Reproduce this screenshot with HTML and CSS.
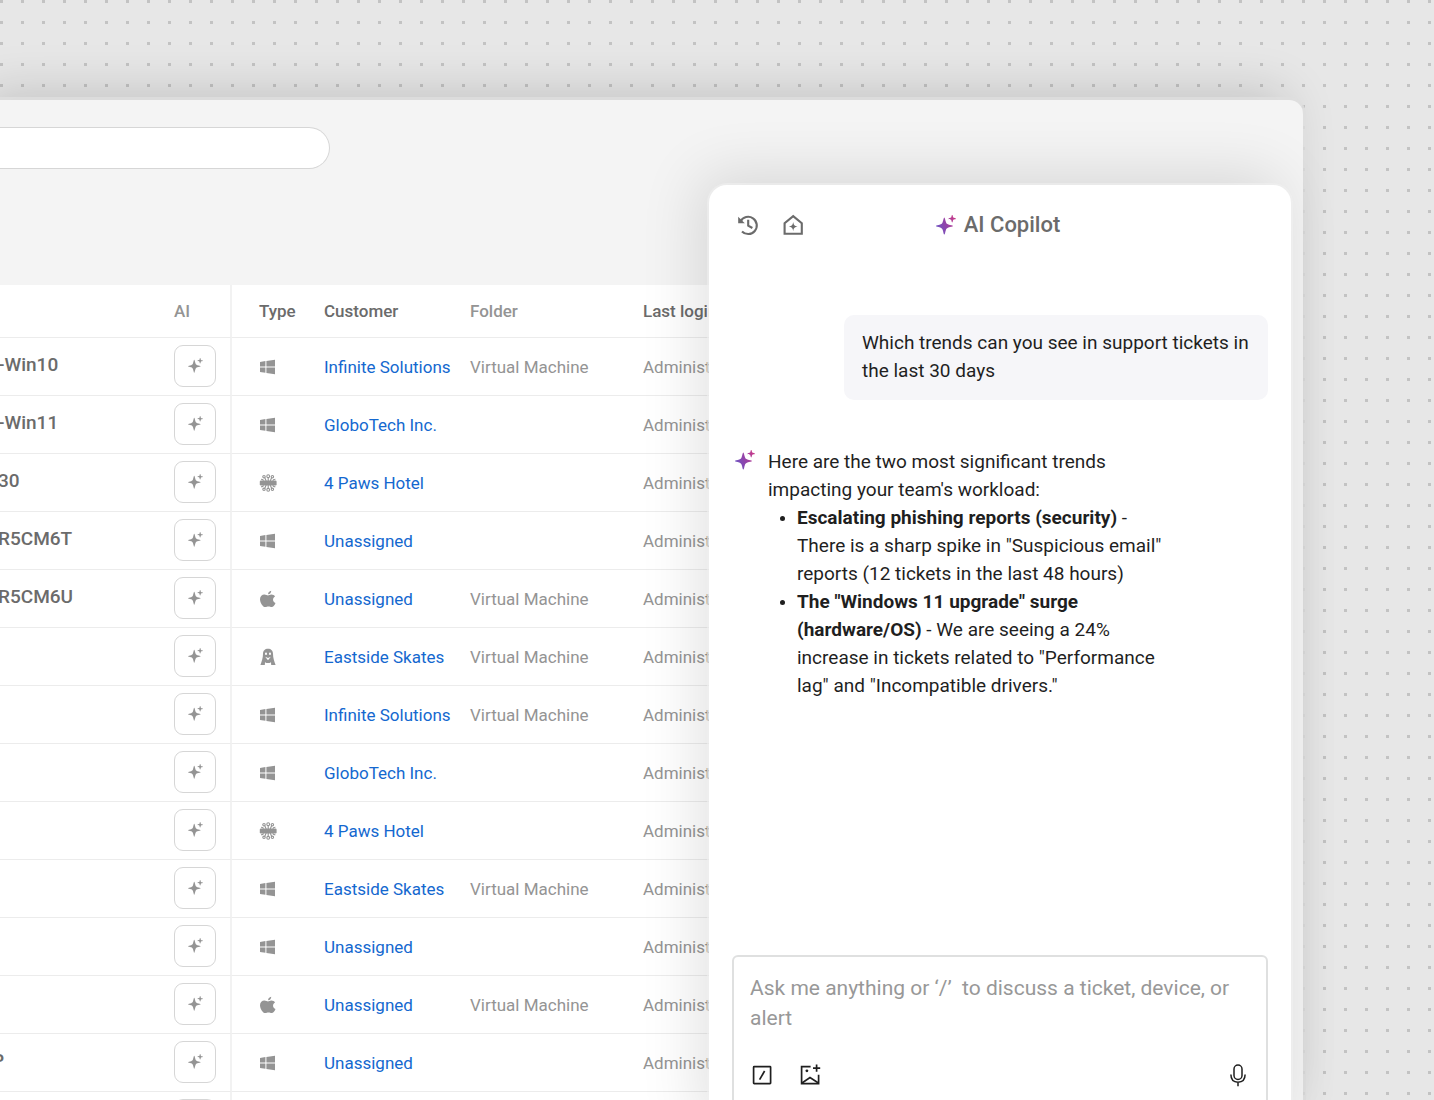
FILE: index.html
```html
<!DOCTYPE html>
<html lang="en">
<head>
  <meta charset="UTF-8" />
  <meta name="viewport" content="width=device-width, initial-scale=1.0" />
  <title>AI Copilot</title>
  <link rel="stylesheet" href="styles.css">
</head>
<body>
  <svg class="sprite" aria-hidden="true">
    <defs>
      <linearGradient id="spark-gradient" gradientUnits="userSpaceOnUse" x1="0" y1="14" x2="20" y2="4">
        <stop offset="0" stop-color="#6b55c4" />
        <stop offset="0.5" stop-color="#9443a8" />
        <stop offset="1" stop-color="#c93a88" />
      </linearGradient>
    </defs>
    <symbol id="spark" viewBox="0 0 20 20">
      <path d="M8.3 2.4C8.9 2.4 9.2 5 9.9 7.1C10.4 8.6 11 9.1 12.4 9.6C14.4 10.2 16.9 10.4 16.9 11C16.9 11.6 14.4 11.8 12.4 12.4C11 12.9 10.4 13.4 9.9 14.9C9.2 17 8.9 19.6 8.3 19.6C7.7 19.6 7.4 17 6.7 14.9C6.2 13.4 5.6 12.9 4.2 12.4C2.2 11.8 0 11.6 0 11C0 10.4 2.2 10.2 4.2 9.6C5.6 9.1 6.2 8.6 6.7 7.1C7.4 5 7.7 2.4 8.3 2.4Z" />
      <path d="M16.2 0C16.9 0 16.8 2 17.3 2.6C17.9 3.1 19.9 3 19.9 3.7C19.9 4.4 17.9 4.3 17.3 4.8C16.8 5.4 16.9 7.4 16.2 7.4C15.5 7.4 15.6 5.4 15.1 4.8C14.5 4.3 12.5 4.4 12.5 3.7C12.5 3 14.5 3.1 15.1 2.6C15.6 2 15.5 0 16.2 0Z" />
    </symbol>
    <symbol id="windows" viewBox="0 0 18 18">
      <path d="M1 3.9L6.4 3.1V8.4H1ZM7.4 2.9L16 1.7V8.4H7.4ZM1 9.5H6.4V14.7L1 13.9ZM7.4 9.5H16V16.2L7.4 14.9Z" />
    </symbol>
    <symbol id="apple" viewBox="0 0 18 18">
      <path d="M12.2.7C12.4 2.5 10.9 4.3 9.1 4.3C8.9 2.6 10.5.9 12.2.7Z" />
      <path d="M9 5.4C9.8 5.4 10.8 4.5 12.4 4.5C13.9 4.5 15.3 5.2 16 6.4C13.1 8 13.6 11.8 16.5 12.9C15.8 14.9 14.3 17.1 12.7 17.1C11.4 17.1 11 16.4 9.5 16.4C8 16.4 7.5 17.1 6.3 17.1C3.8 17.1 1 12.6 1 9.2C1 6.2 3.1 4.5 5.4 4.5C6.9 4.5 8.1 5.4 9 5.4Z" />
    </symbol>
    <symbol id="linux" viewBox="0 0 18 18">
      <path fill-rule="evenodd" d="M9 .8C12 .8 14 2.8 14 5.8C14 10 15.2 13.2 16.6 17.1H12.2L12 14.2C10.2 15.4 7.8 15.4 6 14.2L5.8 17.1H1.4C2.8 13.2 4 10 4 5.8C4 2.8 6 .8 9 .8ZM7 4.6A1 1.2 0 1 0 7 7A1 1.2 0 1 0 7 4.6ZM11 4.6A1 1.2 0 1 0 11 7A1 1.2 0 1 0 11 4.6ZM6.2 8.8L9 10L11.8 8.8L9 12.2Z" />
    </symbol>
    <symbol id="hub" viewBox="0 0 18 18">
      <rect x="0.8" y="6.6" width="16.8" height="4.8" rx="1.2" />
      <g fill="none" stroke="currentColor" stroke-width="1.1">
        <circle cx="9.2" cy="2.2" r="1.4" />
        <circle cx="5" cy="2.7" r="1.2" />
        <circle cx="13.4" cy="2.7" r="1.2" />
        <circle cx="9.2" cy="15.8" r="1.4" />
        <circle cx="5" cy="15.3" r="1.2" />
        <circle cx="13.4" cy="15.3" r="1.2" />
        <path d="M9.2 3.6V14.4M5.8 3.8L7.2 7M12.6 3.8L11.2 7M5.8 14.2L7.2 11M12.6 14.2L11.2 11M4.4 6.8C4.4 5.6 3.4 5.2 2 5.2M14 6.8C14 5.6 15 5.2 16.4 5.2M4.4 11.2C4.4 12.4 3.4 12.8 2 12.8M14 11.2C14 12.4 15 12.8 16.4 12.8" />
      </g>
    </symbol>
  </svg>

  <div class="window">
    <header class="topbar">
      <input type="search" class="search" aria-label="Search devices">
    </header>

    <table class="devices">
      <colgroup>
        <col class="col-name">
        <col class="col-ai">
        <col class="col-type">
        <col class="col-customer">
        <col class="col-folder">
        <col>
      </colgroup>
      <thead>
        <tr>
          <th></th>
          <th class="ai light">AI</th>
          <th class="type">Type</th>
          <th>Customer</th>
          <th class="light">Folder</th>
          <th>Last login</th>
        </tr>
      </thead>
      <tbody id="device-rows"></tbody>
    </table>

    <aside class="copilot">
      <header class="copilot-header">
        <div class="header-actions">
          <button aria-label="History">
            <svg class="line" width="24" height="24" viewBox="0 0 24 24" stroke-width="2.1">
              <path d="M4.6 8.4A8.6 8.6 0 1 1 6 18.4" />
              <path d="M12.2 6.8V12.6L16.4 15" />
              <path class="solid" d="M2.2 3.8V10.2H8.8Z" />
            </svg>
          </button>
          <button aria-label="Home">
            <svg class="line" width="24" height="24" viewBox="0 0 24 24" stroke-width="2.1">
              <path d="M3.6 20.8V10.2L12.2 3.2L20.8 10.2V20.8Z" />
              <path class="solid" d="M12.2 9C12.7 12.2 13.6 13 16.6 13.6C13.6 14.2 12.7 15 12.2 18.2C11.7 15 10.8 14.2 7.8 13.6C10.8 13 11.7 12.2 12.2 9Z" />
            </svg>
          </button>
        </div>
        <h1><svg class="spark" width="20" height="20"><use href="#spark" /></svg>AI Copilot</h1>
      </header>

      <div class="chat">
        <p class="question">Which trends can you see in support tickets in the last 30 days</p>
        <div class="answer">
          <svg class="spark" width="20" height="20"><use href="#spark" /></svg>
          <div class="answer-text">
            <p>Here are the two most significant trends impacting your team's workload:</p>
            <ul>
              <li><strong>Escalating phishing reports (security)</strong> - There is a sharp spike in "Suspicious email" reports (12 tickets in the last 48 hours)</li>
              <li><strong>The "Windows 11 upgrade" surge (hardware/OS)</strong> - We are seeing a 24% increase in tickets related to "Performance lag" and "Incompatible drivers."</li>
            </ul>
          </div>
        </div>
      </div>

      <form class="composer">
        <textarea rows="2" aria-label="Message" placeholder="Ask me anything or ‘/’  to discuss a ticket, device, or alert"></textarea>
        <div class="composer-tools">
          <button type="button" aria-label="Commands">
            <svg class="line" width="24" height="24" viewBox="0 0 24 24" stroke-width="1.7">
              <rect x="3.6" y="3.6" width="17" height="17" rx="0.6" />
              <path d="M14.6 8L9.6 16.6" />
            </svg>
          </button>
          <button type="button" aria-label="Add image">
            <svg class="line" width="24" height="24" viewBox="0 0 24 24" stroke-width="1.7">
              <path d="M12.6 3.6H3.6V20.6H20.6V11.8" />
              <path d="M4 20L12 14.6L20.4 20" />
              <path d="M18.6 1.6V8.8M15 5.2H22.2" />
              <circle class="solid" cx="8.9" cy="7.8" r="1.4" />
            </svg>
          </button>
          <button type="button" class="mic" aria-label="Dictate">
            <svg class="line" width="24" height="24" viewBox="0 0 24 24" stroke-width="1.5">
              <rect x="8" y="2" width="8" height="14.4" rx="4" />
              <path d="M4.9 11.6C4.9 16.6 7.8 19.2 12 19.2C16.2 19.2 19.1 16.6 19.1 11.6M12 19.2V23.2" />
            </svg>
          </button>
        </div>
      </form>
    </aside>
  </div>

  <script>
    const devices = [
      { name: '-Win10', type: 'windows', customer: 'Infinite Solutions', folder: 'Virtual Machine' },
      { name: '-Win11', type: 'windows', customer: 'GloboTech Inc.', folder: '' },
      { name: '30', type: 'hub', customer: '4 Paws Hotel', folder: '' },
      { name: 'R5CM6T', type: 'windows', customer: 'Unassigned', folder: '' },
      { name: 'R5CM6U', type: 'apple', customer: 'Unassigned', folder: 'Virtual Machine' },
      { name: '', type: 'linux', customer: 'Eastside Skates', folder: 'Virtual Machine' },
      { name: '', type: 'windows', customer: 'Infinite Solutions', folder: 'Virtual Machine' },
      { name: '', type: 'windows', customer: 'GloboTech Inc.', folder: '' },
      { name: '', type: 'hub', customer: '4 Paws Hotel', folder: '' },
      { name: '', type: 'windows', customer: 'Eastside Skates', folder: 'Virtual Machine' },
      { name: '', type: 'windows', customer: 'Unassigned', folder: '' },
      { name: '', type: 'apple', customer: 'Unassigned', folder: 'Virtual Machine' },
      { name: 'P', cut: true, type: 'windows', customer: 'Unassigned', folder: '' },
      { name: '', type: 'windows', customer: '', folder: '' }
    ];

    document.getElementById('device-rows').innerHTML = devices.map(device => `
      <tr>
        <td class="name ${device.cut ? 'cut' : ''}">${device.name}</td>
        <td class="ai"><button class="ai-btn" aria-label="Ask AI"><svg width="15" height="15"><use href="#spark" /></svg></button></td>
        <td class="type"><svg width="18" height="18" role="img" aria-label="${device.type}"><use href="#${device.type}" /></svg></td>
        <td><a href="#">${device.customer}</a></td>
        <td>${device.folder}</td>
        <td>${device.customer && 'Administrator'}</td>
      </tr>`).join('');
  </script>
</body>
</html>
```
FILE: styles.css
```css
* {
  box-sizing: border-box;
  margin: 0;
  padding: 0;
}
body {
  font-family: Roboto, sans-serif;
  display: flex;
  height: 100vh;
  overflow: hidden;
  padding: 100px 131px 0 0;
  background-color: #e7e7e7;
  background-image: conic-gradient(from 0deg at 3px 3px, transparent 75%, #c3c3c3 0);
  background-size: 21px 21px;
}
button {
  border: none;
  background: none;
  color: inherit;
  cursor: pointer;
}
svg {
  display: block;
  fill: currentColor;
}
.line {
  fill: none;
  stroke: currentColor;
}
.line .solid {
  fill: currentColor;
  stroke: none;
}
.sprite {
  position: absolute;
  width: 0;
  height: 0;
}

/* App window */
.window {
  position: relative;
  flex: 1;
  min-width: 0;
  background: #f4f4f4;
  border-radius: 0 14px 0 0;
  box-shadow: 0 0 0 3px rgba(222, 222, 222, 0.8), -16px -8px 50px rgba(0, 0, 0, 0.16);
}
.topbar {
  height: 185px;
  padding-top: 27px;
}
.search {
  display: block;
  width: 330px;
  height: 42px;
  padding: 0 20px;
  border: 1px solid #d6d6d6;
  border-left: none;
  border-radius: 0 21px 21px 0;
  background: #fff;
  appearance: none;
}

/* Device table */
.devices {
  width: calc(100% - 24px);
  table-layout: fixed;
  border-collapse: separate;
  border-spacing: 0;
  background: #fff;
  color: #949494;
  font-size: 17px;
}
.col-name {
  width: 146px;
}
.col-ai {
  width: 86px;
}
.col-type {
  width: 92px;
}
.col-customer {
  width: 146px;
}
.col-folder {
  width: 173px;
}
.devices th,
.devices td {
  border-bottom: 1px solid #ececec;
  text-align: left;
  vertical-align: middle;
  white-space: nowrap;
}
.devices th {
  height: 53px;
  color: #6b6b6b;
  font-weight: 500;
}
.devices th.light {
  color: #949494;
}
.devices td {
  height: 58px;
}
.devices .ai {
  padding-left: 28px;
  border-right: 2px solid #f2f2f2;
}
.devices td.ai {
  padding-bottom: 1px;
}
.devices .type {
  padding-left: 27px;
}
.devices .name {
  padding-bottom: 4px;
  color: #6b6b6b;
  font-size: 19px;
  font-weight: 500;
  text-indent: -2px;
}
.devices .cut {
  text-indent: -8px;
}
.devices a {
  color: #1468cf;
  text-decoration: none;
}
.ai-btn {
  display: flex;
  align-items: center;
  justify-content: center;
  width: 42px;
  height: 42px;
  padding-bottom: 2px;
  border: 1px solid #d6d6d6;
  border-radius: 9px;
  background: #fff;
}

/* Copilot panel, floats over the table */
.copilot {
  position: absolute;
  top: 85px;
  right: 12px;
  bottom: -40px;
  display: flex;
  flex-direction: column;
  width: 582px;
  padding: 24px 23px;
  border-radius: 18px;
  background: #fff;
  box-shadow: 0 0 0 2px rgba(240, 240, 240, 0.6), -10px -10px 60px rgba(0, 0, 0, 0.12);
}
.copilot-header {
  display: grid;
  grid-template-columns: 1fr auto 1fr;
  align-items: center;
  height: 32px;
  padding-right: 4px;
  color: #6b6b6b;
}
.header-actions {
  display: flex;
  gap: 21px;
  padding-left: 4px;
}
.copilot h1 {
  display: flex;
  align-items: center;
  gap: 8px;
  padding-bottom: 1px;
  font-size: 22px;
  font-weight: 500;
}
.spark {
  flex: none;
  fill: url(#spark-gradient);
}
.chat {
  display: flex;
  flex-direction: column;
  flex: 1;
  gap: 48px;
  padding-top: 74px;
  color: #1f1f1f;
  font-size: 19px;
  line-height: 28px;
}
.question {
  align-self: flex-end;
  width: 424px;
  padding: 14px 18px 15px;
  border-radius: 10px;
  background: #f6f6f9;
}
.answer {
  display: flex;
  gap: 13px;
  padding-left: 3px;
}
.answer .spark {
  margin-top: 2px;
}
.answer-text {
  max-width: 400px;
}
.answer ul {
  padding-left: 29px;
  list-style: none;
}
.answer li::before {
  content: "";
  float: left;
  width: 5px;
  height: 5px;
  margin: 12px 0 0 -17px;
  border-radius: 50%;
  background: #1f1f1f;
}
.answer strong {
  font-weight: 700;
}
.composer {
  padding: 16px 16px 27px;
  border: 2px solid #dfe0e0;
  border-radius: 6px;
}
.composer textarea {
  display: block;
  width: 100%;
  height: 60px;
  border: none;
  outline: none;
  resize: none;
  background: none;
  font: 21px/30px Roboto, sans-serif;
}
.composer textarea::placeholder {
  color: #989898;
}
.composer-tools {
  display: flex;
  gap: 24px;
  margin-top: 30px;
  color: #1f1f1f;
}
.mic {
  margin-left: auto;
}
```
